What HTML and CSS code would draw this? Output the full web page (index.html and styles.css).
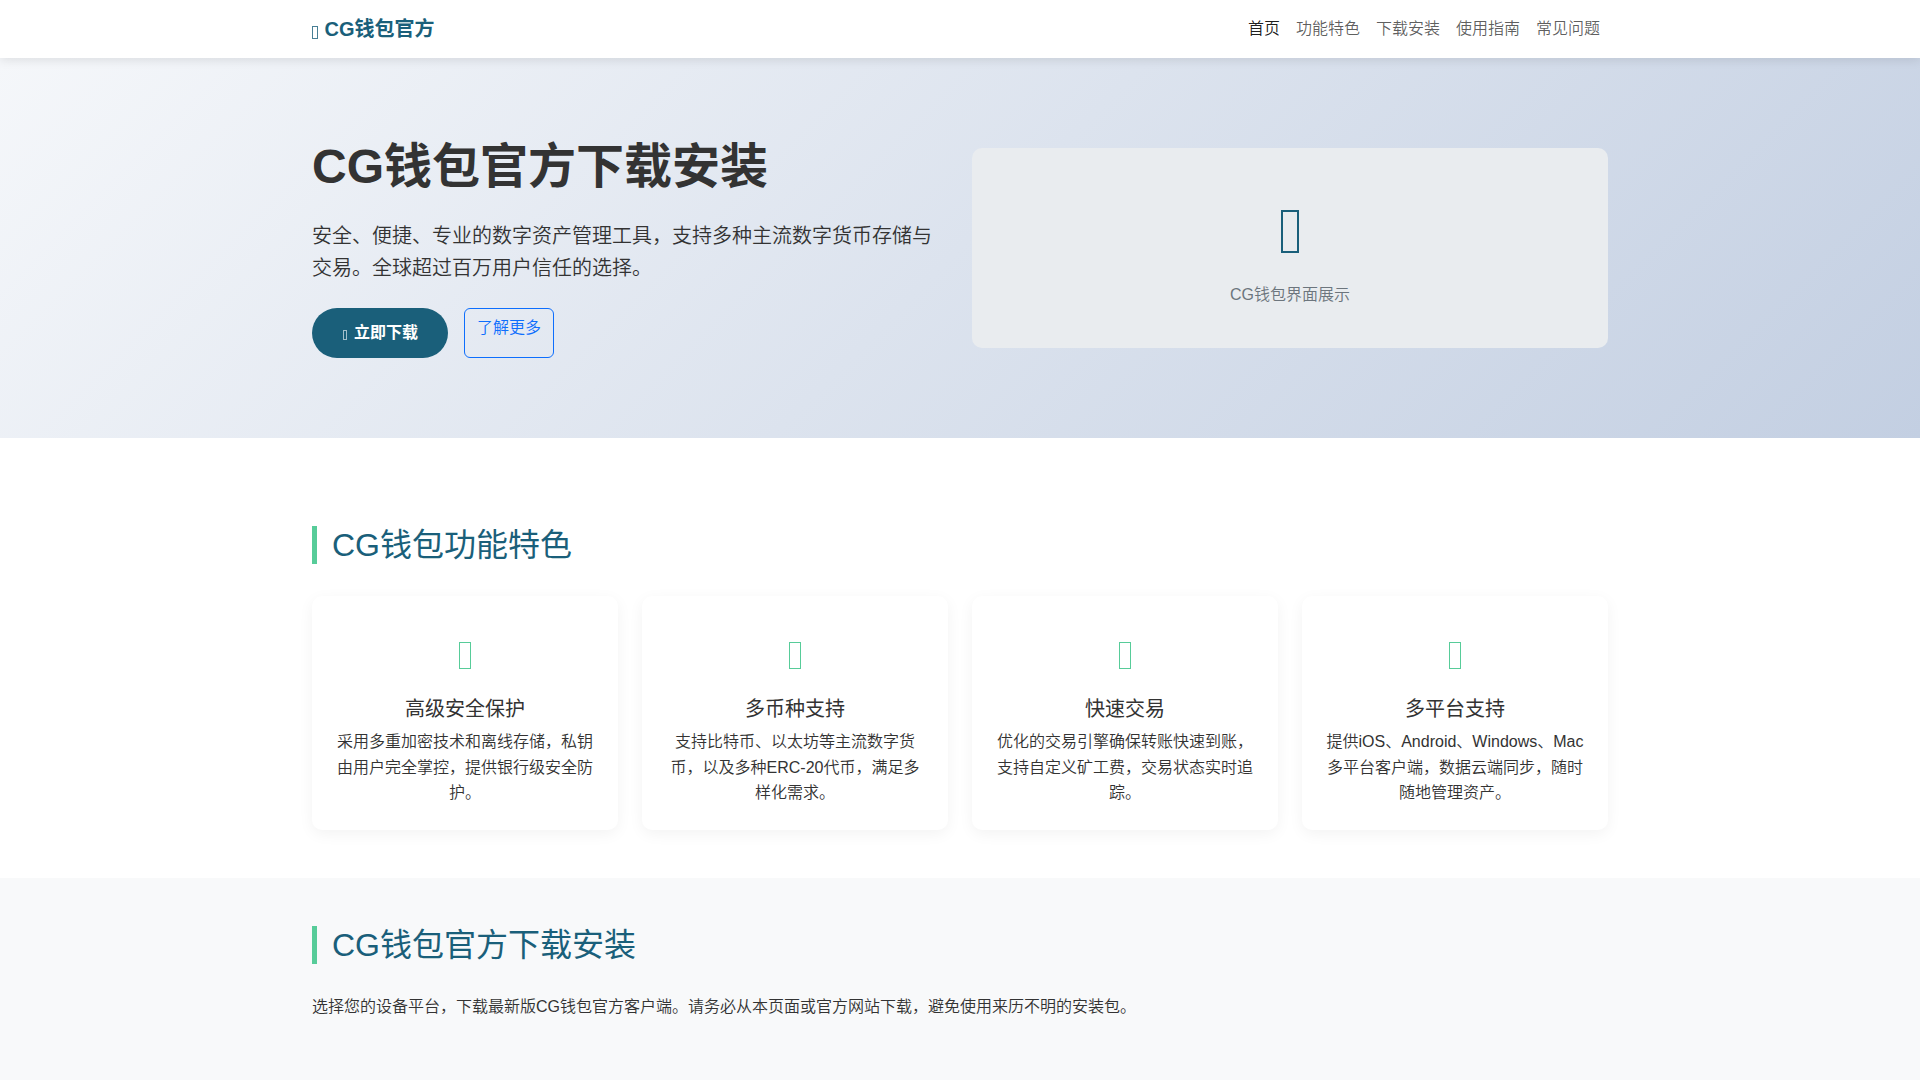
FILE: index.html
```html
<!DOCTYPE html>
<html lang="zh-CN">
<head>
<meta charset="utf-8">
<title>CG钱包官方下载安装</title>
<link rel="stylesheet" href="styles.css">
</head>
<body>
<nav class="navbar">
  <div class="container nav-inner">
    <a class="brand" href="#"><span class="tofu brand-icon"></span>CG钱包官方</a>
    <ul class="nav-links">
      <li><a class="active" href="#">首页</a></li>
      <li><a href="#">功能特色</a></li>
      <li><a href="#">下载安装</a></li>
      <li><a href="#">使用指南</a></li>
      <li><a href="#">常见问题</a></li>
    </ul>
  </div>
</nav>
<header class="hero">
  <div class="container hero-row">
    <div class="hero-col">
      <h1>CG钱包官方下载安装</h1>
      <p class="lead">安全、便捷、专业的数字资产管理工具，支持多种主流数字货币存储与交易。全球超过百万用户信任的选择。</p>
      <div class="actions">
        <a class="btn-primary" href="#"><span class="tofu btn-icon"></span>立即下载</a>
        <a class="btn-outline" href="#">了解更多</a>
      </div>
    </div>
    <div class="hero-col">
      <div class="preview">
        <div class="preview-icon"><span class="tofu"></span></div>
        <p>CG钱包界面展示</p>
      </div>
    </div>
  </div>
</header>
<section class="features">
  <div class="container">
    <h2 class="section-title">CG钱包功能特色</h2>
    <div class="card-grid">
      <article class="card">
        <div class="card-icon"><span class="tofu"></span></div>
        <h3>高级安全保护</h3>
        <p>采用多重加密技术和离线存储，私钥由用户完全掌控，提供银行级安全防护。</p>
      </article>
      <article class="card">
        <div class="card-icon"><span class="tofu"></span></div>
        <h3>多币种支持</h3>
        <p>支持比特币、以太坊等主流数字货币，以及多种ERC-20代币，满足多样化需求。</p>
      </article>
      <article class="card">
        <div class="card-icon"><span class="tofu"></span></div>
        <h3>快速交易</h3>
        <p>优化的交易引擎确保转账快速到账，支持自定义矿工费，交易状态实时追踪。</p>
      </article>
      <article class="card">
        <div class="card-icon"><span class="tofu"></span></div>
        <h3>多平台支持</h3>
        <p>提供iOS、Android、Windows、Mac多平台客户端，数据云端同步，随时随地管理资产。</p>
      </article>
    </div>
  </div>
</section>
<section class="download">
  <div class="container">
    <h2 class="section-title">CG钱包官方下载安装</h2>
    <p class="download-text">选择您的设备平台，下载最新版CG钱包官方客户端。请务必从本页面或官方网站下载，避免使用来历不明的安装包。</p>
  </div>
</section>
</body>
</html>
```
FILE: styles.css
```css
* { box-sizing: border-box; }
html, body { margin: 0; height: 100%; }
body {
  min-height: 100vh;
  display: flex;
  flex-direction: column;
  overflow: hidden;
  background: #fff;
  color: #333;
  font-family: "Liberation Sans", "Noto Sans CJK SC", sans-serif;
  font-size: 16px;
  font-weight: 350;
  line-height: 1.6;
}
a { text-decoration: none; }
h1, h2, h3, p, ul { margin: 0; padding: 0; }
.container { width: 1320px; margin: 0 auto; padding: 0 12px; }
.tofu {
  display: inline-block;
  width: 0.28em;
  height: 0.67em;
  border: 0.035em solid currentColor;
  vertical-align: -0.1em;
}
.navbar {
  flex: none;
  height: 58px;
  background: #fff;
  box-shadow: 0 2px 10px rgba(0, 0, 0, 0.1);
  position: relative;
  z-index: 2;
}
.nav-inner { display: flex; align-items: center; justify-content: space-between; height: 100%; }
.brand { color: #1a5f7a; font-size: 20px; font-weight: 700; }
.brand-icon { margin-right: 7px; vertical-align: -0.17em; opacity: 0.8; }
.nav-links { display: flex; list-style: none; }
.nav-links a { display: block; padding: 8px; color: rgba(0, 0, 0, 0.65); }
.nav-links a.active { color: rgba(0, 0, 0, 0.9); }
.hero {
  flex: none;
  height: 380px;
  display: flex;
  align-items: center;
  background: linear-gradient(135deg, #f5f7fa 0%, #c3cfe2 100%);
}
.hero-row { display: grid; grid-template-columns: 1fr 1fr; column-gap: 24px; align-items: center; }
h1 { font-size: 48px; font-weight: 700; line-height: 1.2; margin-bottom: 24px; }
.lead { font-size: 20px; margin-bottom: 24px; }
.actions { display: flex; gap: 16px; }
.btn-primary {
  display: block;
  padding: 12px 30px;
  border-radius: 30px;
  background: #1a5f7a;
  color: #fff;
  font-weight: 700;
}
.btn-icon { margin: 0 6.5px 0 1px; vertical-align: -0.15em; opacity: 0.6; }
.btn-outline {
  display: block;
  padding: 6px 12px;
  border: 1px solid #0d6efd;
  border-radius: 6px;
  color: #0d6efd;
}
.preview {
  height: 200px;
  border-radius: 10px;
  background: #e9ecef;
  display: flex;
  flex-direction: column;
  align-items: center;
  justify-content: center;
  color: #6c757d;
}
.preview-icon { color: #1a5f7a; font-size: 64px; }
.preview-icon .tofu { vertical-align: 0; }
.preview p { margin-bottom: 9px; }
.features { flex: none; height: 440px; padding-top: 88px; }
.section-title {
  border-left: 5px solid #57cc99;
  padding-left: 15px;
  color: #1a5f7a;
  font-size: 32px;
  font-weight: 400;
  line-height: 38px;
  margin-bottom: 32px;
}
.card-grid { display: grid; grid-template-columns: repeat(4, 1fr); gap: 24px; }
.card {
  padding: 24px;
  border-radius: 10px;
  background: #fff;
  box-shadow: 0 4px 15px rgba(0, 0, 0, 0.05);
  text-align: center;
}
.card-icon { color: #57cc99; font-size: 40px; margin-bottom: 13px; }
.card-icon .tofu { vertical-align: -0.075em; }
h3 { font-size: 20px; font-weight: 400; line-height: 1.2; margin-bottom: 8px; }
.download { flex: 1; background: #f8f9fa; padding-top: 48px; }
.download-text { margin-top: -2px; }
```
